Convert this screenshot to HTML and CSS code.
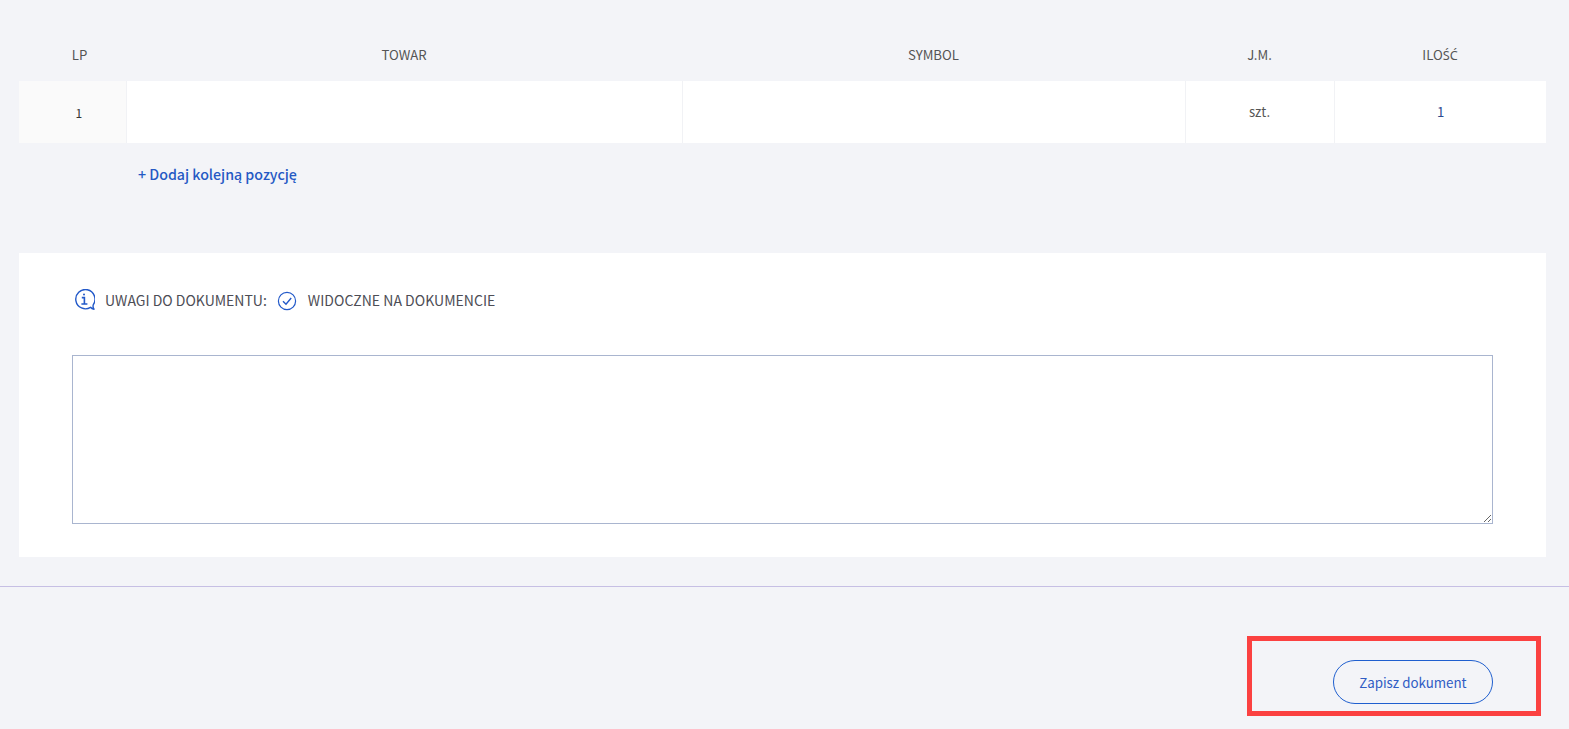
FILE: index.html
```html
<!DOCTYPE html>
<html lang="pl">
<head>
<meta charset="utf-8">
<title>Dokument</title>
<link rel="stylesheet" href="styles.css">
</head>
<body>
<main class="page">
  <section class="items">
    <table class="items-table">
      <colgroup>
        <col class="col-lp"><col class="col-towar"><col class="col-symbol"><col class="col-jm"><col class="col-ilosc">
      </colgroup>
      <thead>
        <tr><th class="head-lp">LP</th><th>TOWAR</th><th>SYMBOL</th><th>J.M.</th><th>ILO<span class="accented">ŚĆ</span></th></tr>
      </thead>
      <tbody>
        <tr>
          <td class="cell-lp">1</td>
          <td></td>
          <td></td>
          <td class="cell-unit">szt.</td>
          <td class="cell-qty">1</td>
        </tr>
      </tbody>
    </table>
    <a class="add-row" href="#">+ Dodaj kolejną pozycję</a>
  </section>

  <section class="notes">
    <div class="notes-head">
      <svg class="icon-info" viewBox="0 0 21 21" width="21" height="21" fill="none" stroke="#2259c9" stroke-width="1.4">
        <path d="M20 20.2c-1.5-.2-2.7-.9-3.5-1.9A9.6 9.6 0 1 1 19.3 15.6c-.5 1.5-.2 3.2.7 4.6z" stroke-linejoin="round"/>
        <circle cx="10" cy="5.4" r="1" fill="#2259c9" stroke="none"/>
        <path d="M7.8 8.6h2.6v6.3M7.4 15h6" stroke-width="1.6"/>
      </svg>
      <span class="notes-label">UWAGI DO DOKUMENTU:</span>
      <svg class="icon-check" viewBox="0 0 20 20" width="20" height="20" fill="none" stroke="#2259c9" stroke-width="1.2">
        <circle cx="10" cy="10" r="8.6"/>
        <path d="M6 10.2l3 3 5.2-6.2" stroke-width="1.4"/>
      </svg>
      <span class="notes-visible">WIDOCZNE NA DOKUMENCIE</span>
    </div>
    <textarea class="notes-input"></textarea>
  </section>

  <hr class="divider">

  <footer class="actions">
    <button class="save" type="button">Zapisz dokument</button>
    <div class="highlight"></div>
  </footer>
</main>
</body>
</html>
```

FILE: styles.css
```css
* { box-sizing: border-box; }

html, body {
  margin: 0;
  height: 100%;
}

body {
  background: #f3f4f8;
  color: #4a4a4a;
  font-family: "Noto Sans CJK SC", "Noto Sans", sans-serif;
  font-size: 14px;
  overflow: hidden;
}

.page {
  position: relative;
  padding-top: 31px;
}

.items {
  padding: 0 23px 0 19px;
}

.items-table {
  width: 1527px;
  border-collapse: collapse;
  table-layout: fixed;
}

.col-lp { width: 107px; }
.col-towar { width: 556px; }
.col-symbol { width: 503px; }
.col-jm { width: 149px; }
.col-ilosc { width: 212px; }

.items-table th {
  height: 50px;
  padding: 0 0 4px;
  font-weight: 400;
  font-size: 13.2px;
  color: #555;
  text-align: center;
}

.items-table th.head-lp { padding-left: 14px; }

.accented {
  font-family: "Noto Sans", sans-serif;
  font-size: 12.7px;
}

.items-table td {
  height: 62px;
  padding: 0 0 2px;
  background: #fff;
  border-left: 1px solid #f1f2f5;
  text-align: center;
  font-size: 13.2px;
}

.items-table td:first-child { border-left: 0; }

.items-table td.cell-lp {
  padding: 0 0 0 13px;
  background: #fafafa;
  color: #333;
  font-size: 12px;
}

.cell-unit { color: #555; }
.items-table td.cell-qty {
  padding-left: 1px;
  color: #2e4a8f;
}

.add-row {
  display: block;
  margin: 20px 0 0 119px;
  color: #2559c4;
  font-size: 14.2px;
  font-weight: 500;
  line-height: 22px;
  text-decoration: none;
}

.notes {
  width: 1527px;
  height: 304px;
  margin: 68px 0 0 19px;
  padding: 35px 53px 0;
  background: #fff;
}

.notes-head {
  display: flex;
  align-items: center;
  height: 24px;
  color: #4d4d55;
}

.icon-info { margin: -2px 0 0 2px; }
.notes-label { margin-left: 10px; }
.icon-check { margin: 2px 0 0 10px; }
.notes-visible {
  margin-left: 11px;
  letter-spacing: 0.03px;
}

.notes-input {
  display: block;
  width: 1421px;
  height: 169px;
  margin-top: 43px;
  border: 1px solid #a9b5cf;
  border-radius: 0;
  background: #fff;
  outline: none;
}

.divider {
  height: 1px;
  margin: 29px 0 0;
  border: 0;
  background: #c6bfe4;
}

.actions {
  position: relative;
  display: flex;
  justify-content: flex-end;
  padding: 73px 76px 0 0;
}

.save {
  width: 160px;
  height: 44px;
  border: 1px solid #1f5fcf;
  border-radius: 22px;
  background: transparent;
  color: #2f5cc4;
  font-family: inherit;
  font-size: 13.333px;
}

.highlight {
  position: absolute;
  top: 49px;
  left: 1247px;
  width: 294px;
  height: 80px;
  border: 5px solid #fb4141;
  pointer-events: none;
}
```
